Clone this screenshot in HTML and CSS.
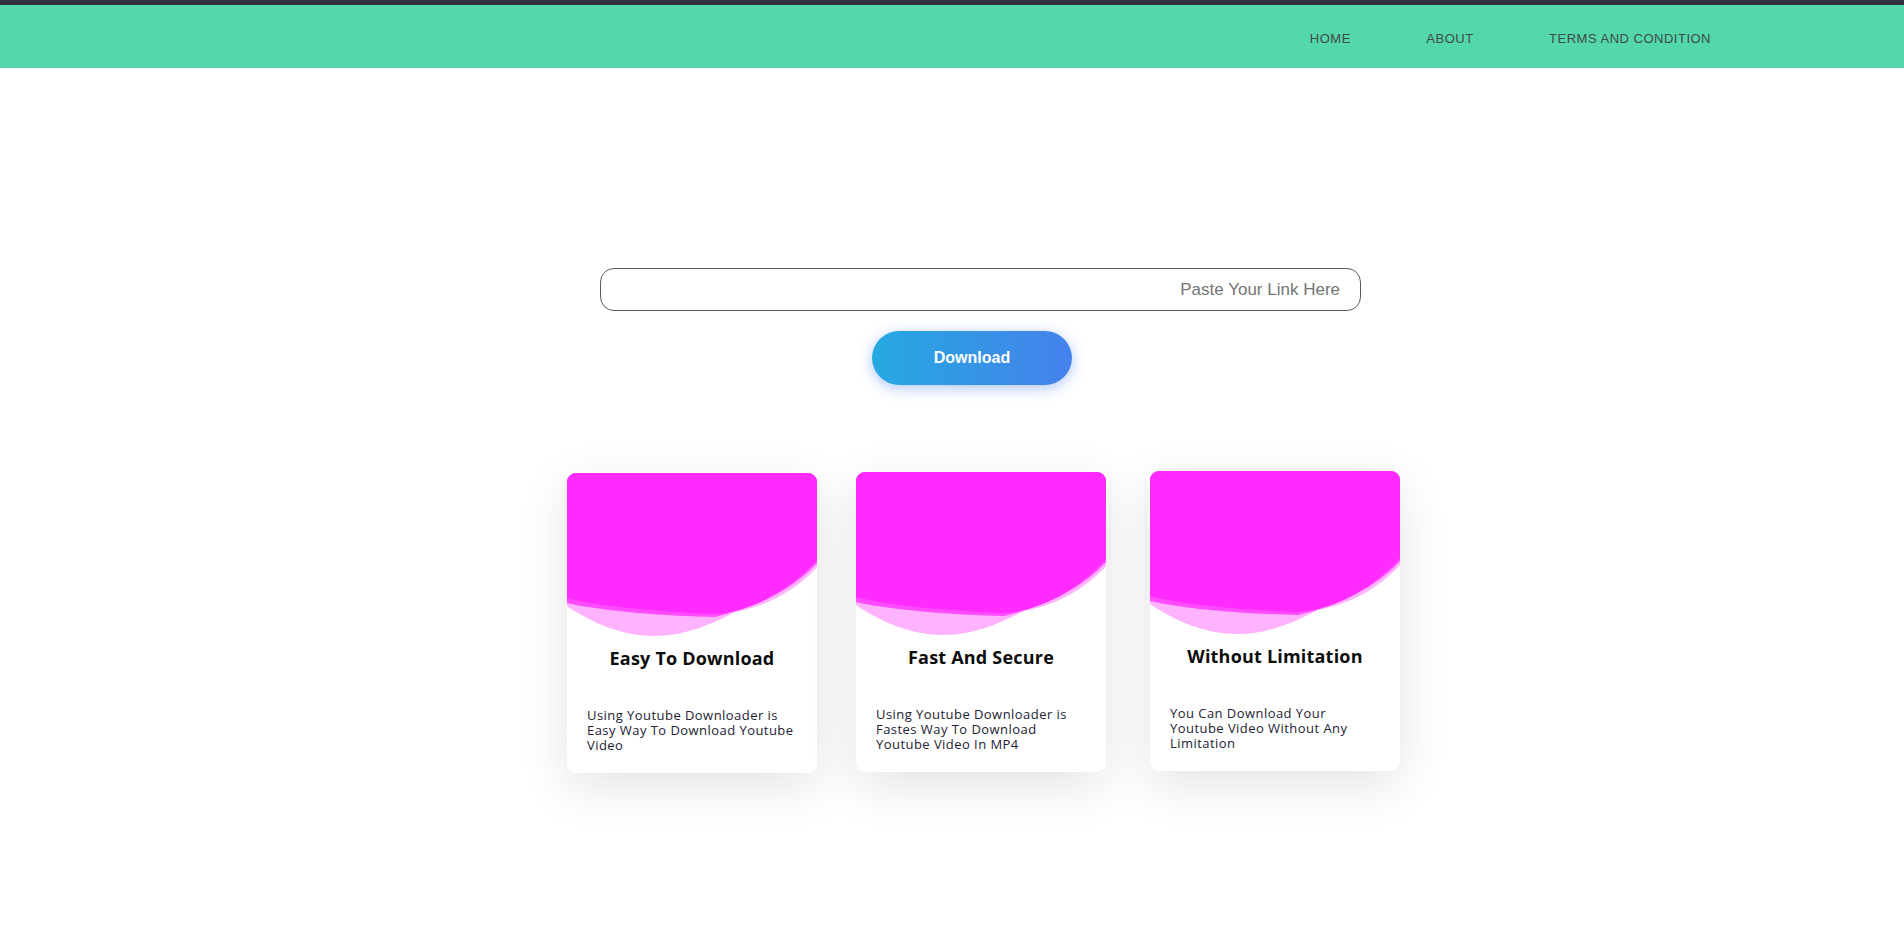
FILE: index.html
```html
<!DOCTYPE html>
<html lang="en">
<head>
<meta charset="utf-8">
<title>Youtube Downloader</title>
<link rel="stylesheet" href="styles.css">
</head>
<body>
<header class="topbar">
  <nav class="nav">
    <a class="nav-link" href="#">HOME</a>
    <a class="nav-link" href="#">ABOUT</a>
    <a class="nav-link" href="#">TERMS AND CONDITION</a>
  </nav>
</header>
<main class="main">
  <section class="search">
    <input class="link-input" type="text" placeholder="Paste Your Link Here">
    <button class="download-btn" type="button">Download</button>
  </section>
  <section class="cards">
    <article class="card card-a">
      <svg class="wave" viewBox="0 0 250 165" preserveAspectRatio="none">
        <path fill="#ffb3ff" d="M0,0 H250 V94 C228,118 200,133 168,139 C145,151 118,163 88,163 C55,163 25,150 0,133 Z"/>
        <path fill="#ff4cff" d="M0,0 H250 V90 C226,116 190,134 148,144 C100,143 40,139 0,130 Z"/>
        <path fill="#ff2bff" d="M0,0 H250 V87 C225,115 185,140 145,141 C80,138 30,133 0,125 Z"/>
      </svg>
      <h3 class="card-title">Easy To Download</h3>
      <p class="card-text">Using Youtube Downloader is Easy Way To Download Youtube Video</p>
    </article>
    <article class="card card-b">
      <svg class="wave" viewBox="0 0 250 165" preserveAspectRatio="none">
        <path fill="#ffb3ff" d="M0,0 H250 V94 C228,118 200,133 168,139 C145,151 118,163 88,163 C55,163 25,150 0,133 Z"/>
        <path fill="#ff4cff" d="M0,0 H250 V90 C226,116 190,134 148,144 C100,143 40,139 0,130 Z"/>
        <path fill="#ff2bff" d="M0,0 H250 V87 C225,115 185,140 145,141 C80,138 30,133 0,125 Z"/>
      </svg>
      <h3 class="card-title">Fast And Secure</h3>
      <p class="card-text">Using Youtube Downloader is Fastes Way To Download Youtube Video In MP4</p>
    </article>
    <article class="card card-c">
      <svg class="wave" viewBox="0 0 250 165" preserveAspectRatio="none">
        <path fill="#ffb3ff" d="M0,0 H250 V94 C228,118 200,133 168,139 C145,151 118,163 88,163 C55,163 25,150 0,133 Z"/>
        <path fill="#ff4cff" d="M0,0 H250 V90 C226,116 190,134 148,144 C100,143 40,139 0,130 Z"/>
        <path fill="#ff2bff" d="M0,0 H250 V87 C225,115 185,140 145,141 C80,138 30,133 0,125 Z"/>
      </svg>
      <h3 class="card-title">Without Limitation</h3>
      <p class="card-text">You Can Download Your Youtube Video Without Any Limitation</p>
    </article>
  </section>
</main>
</body>
</html>
```
FILE: styles.css
```css
* { box-sizing: border-box; }

body {
  margin: 0;
  background: #ffffff;
  font-family: "Liberation Sans", Arial, sans-serif;
}

.topbar {
  border-top: 5px solid #31333f;
  background: #53d7ab;
  height: 68px;
}

.nav {
  height: 100%;
  display: flex;
  align-items: center;
  justify-content: flex-end;
  gap: 75.5px;
  padding: 3px 193px 0 0;
}

.nav-link {
  font-family: "Liberation Sans", Arial, sans-serif;
  font-size: 13px;
  letter-spacing: 0.5px;
  color: #404a47;
  text-decoration: none;
}

.main {
  padding-top: 200px;
}

.search {
  display: flex;
  flex-direction: column;
  align-items: center;
  padding-left: 57px;
}

.link-input {
  width: 761px;
  height: 43px;
  border: 1px solid #5c5c5c;
  border-radius: 14px;
  padding: 0 20px;
  text-align: right;
  font-family: "Liberation Sans", Arial, sans-serif;
  font-size: 17px;
  color: #333;
  background: #fff;
  outline: none;
}

.link-input::placeholder {
  color: #757575;
}

.download-btn {
  margin: 20px 17px 0 0;
  width: 200px;
  height: 54px;
  border: none;
  border-radius: 27px;
  background: linear-gradient(90deg, #25a9e0 0%, #4581ec 100%);
  box-shadow: 0 3px 14px rgba(70, 128, 236, 0.45);
  color: #ffffff;
  font-family: "Liberation Sans", Arial, sans-serif;
  font-size: 16px;
  font-weight: 700;
}

.cards {
  margin-top: 86px;
  display: flex;
  align-items: flex-start;
  justify-content: center;
  gap: 39px;
  padding-left: 63px;
  padding-bottom: 100px;
}

.card {
  width: 250px;
  height: 300px;
  background: #ffffff;
  border-radius: 9px;
  overflow: hidden;
  box-shadow: 0 14px 50px rgba(0, 0, 0, 0.11);
  display: flex;
  flex-direction: column;
}

.card-a { margin-top: 2px; }
.card-b { margin-top: 1px; }
.card-c { margin-left: 5px; }

.wave {
  display: block;
  width: 250px;
  height: 165px;
  flex: none;
}

.card-title {
  margin: 8px 0 0;
  text-align: center;
  font-family: "Open Sans", sans-serif;
  font-weight: 700;
  font-size: 18px;
  line-height: 24px;
  letter-spacing: 0.2px;
  color: #0d0d0d;
}

.card-text {
  margin: 38px 0 0;
  padding: 0 20px;
  font-family: "Open Sans", sans-serif;
  font-size: 13px;
  line-height: 15px;
  letter-spacing: 0.45px;
  color: #222233;
}
```
